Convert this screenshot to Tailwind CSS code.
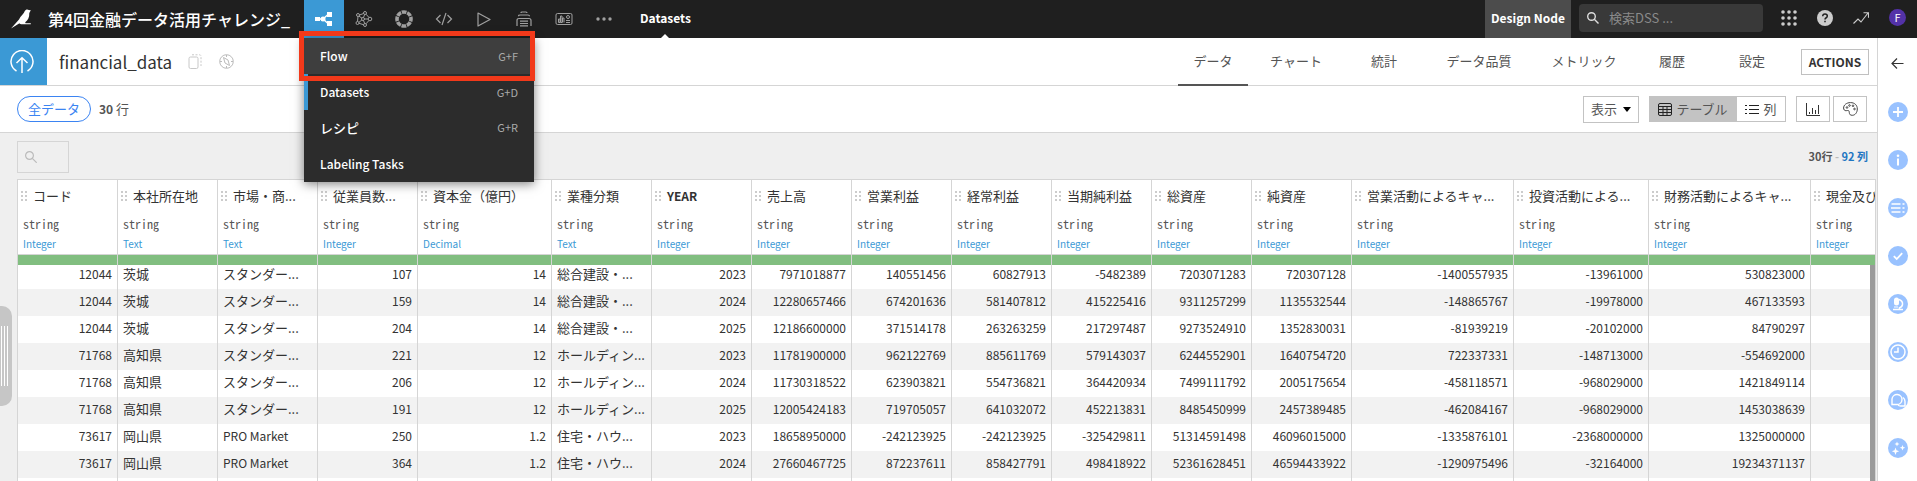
<!DOCTYPE html>
<html lang="ja">
<head>
  <meta charset="UTF-8">
  <meta name="viewport" content="width=device-width, initial-scale=1.0">
  <title>financial_data - Datasets</title>
  <script src="https://cdn.jsdelivr.net/npm/@tailwindcss/browser@4"></script>
</head>
<body class="flex flex-col h-screen overflow-hidden bg-white text-[#333] text-[13px] leading-5 font-['Noto_Sans_CJK_JP',sans-serif]">

  <!-- Top bar -->
  <header class="flex h-[38px] shrink-0 items-center bg-[#1f1f1f] text-white">
    <div class="flex w-[304px] items-center pb-px">
      <a href="#" class="ml-[11px] mr-[17px]" aria-label="Home">
        <svg class="block w-5 h-5" viewBox="0 0 20 20" fill="#fff">
          <path d="M19.800 1.200 17.800.9C16.500 0 14.500.3 13.800 2 13 4.500 9.500 7 8 10.500L0 19.500 8.500 14.200C8.500 15 10 15.200 11 15.200H19.800V14.200H14.500L14.200 13.200C17 11.500 18.500 8 18.300 4z"/>
        </svg>
      </a>
      <a href="#" class="text-base font-medium whitespace-nowrap">第4回金融データ活用チャレンジ_</a>
    </div>

    <nav class="relative flex h-full items-center text-[#a0a0a0]">
      <button class="flex w-10 h-full items-center justify-center bg-[#3b99d5] text-white" aria-label="Flow">
        <svg class="w-[18px] h-[14px]" viewBox="0 0 18 14" fill="currentColor"><path d="M0 5h5v4H0zM12 0h5v5h-5zM12 9h5v5h-5z"/><circle cx="8" cy="7" r="2.500"/><path d="M4 7h4l5-4.500M8 7l5 4.500" stroke="currentColor" stroke-width="1.400" fill="none"/></svg>
      </button>
      <button class="flex w-10 justify-center" aria-label="Lab">
        <svg class="w-[18px] h-[18px]" viewBox="0 0 18 18" fill="none" stroke="currentColor"><circle cx="3" cy="5" r="1.500"/><circle cx="2.500" cy="13" r="1.500"/><circle cx="10" cy="3" r="1.500"/><circle cx="15" cy="9" r="1.800"/><circle cx="10" cy="15" r="1.500"/><circle cx="8" cy="9" r="1.500"/><path d="M4.500 5 8.500 3.500M3 6.500 2.500 11.500M4 6.200 7 8.200M4 12.300 7 9.800M4 13.300 8.500 14.700M11 4.200 14 7.500M14 10.400 11 13.800M9.500 9H13M8.500 7.500 9.700 4.500M8.500 10.500 9.700 13.500"/></svg>
      </button>
      <button class="flex w-10 justify-center" aria-label="Analyses">
        <svg class="w-[18px] h-[18px]" viewBox="0 0 18 18" fill="none" stroke="currentColor"><circle cx="9" cy="9" r="7" stroke-width="3.600" pathLength="80" stroke-dasharray="8.500 1.500" stroke-dashoffset="4"/></svg>
      </button>
      <button class="flex w-10 justify-center" aria-label="Code">
        <svg class="w-[18px] h-[14px]" viewBox="0 0 18 14" fill="none" stroke="currentColor" stroke-width="1.200"><path d="M5.500 3 1.500 7l4 4M12.500 3l4 4-4 4M11 1 7 13"/></svg>
      </button>
      <button class="flex w-10 justify-center" aria-label="Jobs">
        <svg class="w-[14px] h-[15px]" viewBox="0 0 14 15" fill="none" stroke="currentColor" stroke-width="1.200" stroke-linejoin="round"><path d="M1 1 13 7.500 1 14z"/></svg>
      </button>
      <button class="flex w-10 justify-center" aria-label="Automation">
        <svg class="w-4 h-4" viewBox="0 0 16 16" fill="none" stroke="currentColor" stroke-width="1.200"><path d="M5 2Q5 1 6 1h4q1 0 1 1M2.500 5.200Q2.500 4 4 4h8q1.500 0 1.500 1.200M1 15V9.500Q1 7.500 3 7.500h10q2 0 2 2V15M4 10.200h8M4 12.500h8M4 14.900h8"/></svg>
      </button>
      <button class="flex w-10 justify-center" aria-label="Dashboards">
        <svg class="w-[18px] h-[14px]" viewBox="0 0 18 14" fill="none" stroke="currentColor"><rect x="1" y="1.500" width="16" height="11" rx="1.500"/><path d="M3.500 10.500V7h1.500v3.500zM5.500 10.500V4H7v6.500zM7.500 10.500V6H9v4.500M11 8.500h4M11 10.500h4"/><circle cx="13" cy="5" r="1.500"/></svg>
      </button>
      <button class="flex w-10 justify-center" aria-label="More">
        <svg class="w-[18px] h-1" viewBox="0 0 18 4" fill="currentColor"><circle cx="3" cy="2" r="1.700"/><circle cx="9" cy="2" r="1.700"/><circle cx="15" cy="2" r="1.700"/></svg>
      </button>

      <!-- Flow menu -->
      <div class="absolute left-0 top-full z-20 w-[230px] bg-[#2c2c2c] text-white text-xs font-medium shadow-[0_2px_10px_rgba(0,0,0,.5)]">
        <a href="#" class="flex h-9 items-center justify-between bg-[#3e3e3e] px-4">Flow <span class="text-[11px] font-normal text-[#aaa]">G+F</span></a>
        <a href="#" class="flex h-9 items-center justify-between border-l-4 border-[#3b99d5] pl-3 pr-4">Datasets <span class="text-[11px] font-normal text-[#aaa]">G+D</span></a>
        <a href="#" class="flex h-9 items-center justify-between px-4 pb-px text-[13px]">レシピ <span class="text-[11px] font-normal text-[#aaa]">G+R</span></a>
        <a href="#" class="flex h-9 items-center px-4">Labeling Tasks</a>
      </div>
      <div class="absolute -left-[5px] top-[31px] z-30 w-[236px] h-[50px] border-[5px] border-[#f2391a]"></div>
    </nav>

    <a href="#" class="flex flex-col h-full justify-between items-center px-4 pt-2 text-xs leading-5 font-bold">
      Datasets
      <svg class="block w-2 h-1" viewBox="0 0 8 4" fill="#fff"><path d="M4 0 8 4H0z"/></svg>
    </a>

    <div class="ml-auto flex h-full items-center">
      <a href="#" class="flex h-full w-[86px] items-center justify-center bg-[#4c4c4c] pb-[2px] text-xs font-bold">Design Node</a>
      <label class="ml-2 mb-[2px] flex h-7 w-[184px] items-center rounded bg-[#393939] pl-2">
        <svg class="w-3 h-3 shrink-0" viewBox="0 0 12 12" fill="none" stroke="#ddd" stroke-width="1.400"><circle cx="4.500" cy="4.500" r="3.800"/><path d="M7.300 7.300 11.500 11.500"/></svg>
        <input type="search" aria-label="検索" placeholder="検索DSS ..." class="ml-[10px] w-full min-w-0 bg-transparent text-[13px] outline-none placeholder:text-[#8a8a8a]">
      </label>
      <button class="flex w-9 ml-2 justify-center pb-[2px]" aria-label="Apps">
        <svg class="w-4 h-4" viewBox="0 0 16 16" fill="#ccc"><circle cx="2" cy="2" r="1.800"/><circle cx="8" cy="2" r="1.800"/><circle cx="14" cy="2" r="1.800"/><circle cx="2" cy="8" r="1.800"/><circle cx="8" cy="8" r="1.800"/><circle cx="14" cy="8" r="1.800"/><circle cx="2" cy="14" r="1.800"/><circle cx="8" cy="14" r="1.800"/><circle cx="14" cy="14" r="1.800"/></svg>
      </button>
      <button class="flex w-9 justify-center pb-[2px]" aria-label="Help">
        <svg class="w-4 h-4" viewBox="0 0 16 16"><circle cx="8" cy="8" r="8" fill="#ccc"/><path d="M5.700 6.200Q5.800 4 8 4t2.300 2Q10.300 7.200 8.900 8 8 8.500 8 9.600M8 10.700v1.500" stroke="#1f1f1f" stroke-width="1.500" fill="none"/></svg>
      </button>
      <button class="flex w-9 justify-center pb-[2px]" aria-label="Activity">
        <svg class="w-4 h-3" viewBox="0 0 16 12" fill="none" stroke="#ccc" stroke-width="1.100"><path d="M.5 11.500 5 7l3 3 7-9M10.500.7h5v5"/></svg>
      </button>
      <button class="ml-[10px] mr-[11px] mb-1 flex w-[17px] h-[17px] items-center justify-center rounded-full bg-[#5332a8] text-[11px] leading-4">F</button>
    </div>
  </header>

  <div class="flex min-h-0 grow">
    <main class="flex min-w-0 grow flex-col">

      <!-- Dataset title and tabs -->
      <div class="flex h-12 shrink-0 items-center border-b border-[#d5d5d5]">
        <div class="flex w-[47px] h-full items-center justify-center bg-[#3b99d5] pr-[3px]">
          <svg class="w-6 h-6" viewBox="0 0 24 24" fill="none" stroke="#fff" stroke-width="1.500"><path d="M6.500 21A11 11 0 1 1 17.500 21M12 23V8M6.500 13 12 7.800 17.500 13"/></svg>
        </div>
        <h1 class="ml-3 text-[17px] leading-6 text-[#333]">financial_data</h1>
        <button class="ml-4" aria-label="Copy">
          <svg class="w-[14px] h-[15px]" viewBox="0 0 14 15" fill="none" stroke="#c8c8c8"><rect x="1" y="3" width="9" height="11.500" rx="1.500"/><path d="M4 .8h7.500q1.500 0 1.500 1.500V12" stroke-dasharray="2 1.500"/></svg>
        </button>
        <button class="ml-[17px]" aria-label="Explore">
          <svg class="w-[15px] h-[15px]" viewBox="0 0 15 15" fill="none" stroke="#bbb"><circle cx="7.500" cy="7.500" r="6.800"/><path d="M4.500 3.500 9 6l1.500 5.500L6 9zM7.500 1v2M7.500 12v2M1 7.500h2M12 7.500h2"/></svg>
        </button>
        <nav class="ml-auto flex h-full items-stretch text-center text-[#555] leading-[46px]">
          <a href="#" class="w-[70px] -mb-px border-b-2 border-[#555]">データ</a>
          <a href="#" class="w-[96px]">チャート</a>
          <a href="#" class="w-[80px]">統計</a>
          <a href="#" class="w-[110px]">データ品質</a>
          <a href="#" class="w-[100px]">メトリック</a>
          <a href="#" class="w-[76px]">履歴</a>
          <a href="#" class="w-[84px]">設定</a>
        </nav>
        <button class="ml-[7px] mr-2 h-[26px] w-[68px] border border-[#c0c0c0] text-xs font-bold">ACTIONS</button>
      </div>

      <!-- Sample and display options -->
      <div class="flex h-[47px] shrink-0 items-center border-b border-[#d5d5d5] pl-[17px] pr-[10px] text-[#555]">
        <button class="h-[26px] w-[74px] rounded-full border border-[#3b84f2] text-[#3b84f2]">全データ</button>
        <p class="ml-2 pb-px"><b class="text-xs">30</b> 行</p>
        <button class="ml-auto flex h-[27px] w-14 items-center justify-center gap-[6px] border border-[#c3c3c3]">表示
          <svg class="w-2 h-[5px]" viewBox="0 0 8 5"><path d="M0 0h8L4 5z"/></svg>
        </button>
        <div class="ml-[10px] flex h-[26px]">
          <button class="flex w-[88px] items-center justify-center gap-1 bg-[#c3c3c3]">
            <svg class="w-[14px] h-[13px]" viewBox="0 0 14 13" fill="none" stroke="#222"><rect x=".5" y=".5" width="13" height="12" rx="1.500"/><path d="M.5 3.500h13M.5 6.500h13M.5 9.500h13M5 3.500v9M9 3.500v9"/></svg>
            テーブル
          </button>
          <button class="flex w-[49px] items-center justify-center gap-1 border border-l-0 border-[#c3c3c3]">
            <svg class="w-[14px] h-[9px]" viewBox="0 0 14 9" stroke="#222"><path d="M0 .5h2M4 .5h10M0 4.500h2M4 4.500h10M0 8.500h2M4 8.500h10"/></svg>
            列
          </button>
        </div>
        <button class="ml-[10px] flex h-[26px] w-[34px] items-center justify-center border border-[#c3c3c3]" aria-label="Statistics">
          <svg class="w-[14px] h-[13px]" viewBox="0 0 14 13" fill="none" stroke="#333"><path d="M.5 0v12.500H14M3.500 9v2M6.500 5v6M9.500 7v4M12.500 2v9"/></svg>
        </button>
        <button class="ml-[3px] flex h-[26px] w-[34px] items-center justify-center border border-[#c3c3c3]" aria-label="Colors">
          <svg class="w-[15px] h-[14px]" viewBox="0 0 15 14" fill="none" stroke="#444"><path d="M7.500.6C3.500.6.6 3 .6 6c0 1.700 1 2.700 2.300 2.700 1.200 0 2.300-.6 3 .2.900 1-.6 4.400 3.400 4.400 3 0 5-3 5-6.300C14.300 3 11.500.6 7.500.6z"/><circle cx="4" cy="5.500" r=".8"/><circle cx="6.500" cy="3.500" r=".8"/><circle cx="10" cy="3.800" r=".8"/><circle cx="11.500" cy="7" r=".8"/></svg>
        </button>
      </div>

      <!-- Table area -->
      <div class="relative flex min-h-0 grow flex-col bg-[#efefef] pl-[17px] pr-px">
        <div class="flex h-[46px] shrink-0 items-center justify-between pr-2">
          <label class="mt-[2px] flex h-8 w-[52px] items-center border border-[#d5d5d5] pl-[7px]">
            <svg class="w-3 h-3 shrink-0" viewBox="0 0 12 12" fill="none" stroke="#bbb" stroke-width="1.200"><circle cx="4.500" cy="4.500" r="3.900"/><path d="M7.300 7.300 11.700 11.700"/></svg>
            <input type="text" aria-label="列を検索" class="w-full min-w-0 bg-transparent outline-none">
          </label>
          <p class="text-[11px] font-bold text-[#555]">30行 <span class="text-[#bbb]">-</span> <a href="#" class="text-[#1f76c2]">92 列</a></p>
        </div>

        <div class="relative min-h-0 grow overflow-hidden border-t border-r border-[#d5d5d5] bg-white">
          <table class="w-[1955px] table-fixed border-separate border-spacing-0 text-left">
            <thead><tr id="columns"></tr></thead>
            <tbody id="rows"></tbody>
          </table>
          <div class="absolute right-0 top-[85px] bottom-0 w-[5px] bg-[#9a9a9a]"></div>
        </div>

        <!-- Panel handle -->
        <button class="absolute left-0 top-[173px] flex h-[100px] w-3 items-center justify-center gap-[2px] rounded-r-[10px] bg-[#c6c6c6] pr-1" aria-label="Open panel">
          <span class="h-[60px] w-px bg-white"></span>
          <span class="h-[60px] w-px bg-white"></span>
          <span class="h-[60px] w-px bg-white"></span>
        </button>
      </div>
    </main>

    <!-- Right panel -->
    <aside class="flex w-10 shrink-0 flex-col items-center gap-7 border-l border-[#d5d5d5] pt-4">
      <button aria-label="Back"><svg class="block w-5 h-5" viewBox="0 0 20 20" fill="none" stroke="#333" stroke-width="1.200"><path d="M15.500 9.500h-11M9 4.500l-5 5 5 5"/></svg></button>
      <button aria-label="Add"><svg class="block w-5 h-5" viewBox="0 0 20 20"><circle cx="10" cy="10" r="10" fill="#99c2ff"/><path d="M10 5v10M5 10h10" stroke="#fff" stroke-width="1.800"/></svg></button>
      <button aria-label="Details"><svg class="block w-5 h-5" viewBox="0 0 20 20"><circle cx="10" cy="10" r="10" fill="#99c2ff"/><circle cx="10" cy="5.800" r="1.300" fill="#fff"/><path d="M10 8.500v7" stroke="#fff" stroke-width="2"/></svg></button>
      <button aria-label="Schema"><svg class="block w-5 h-5" viewBox="0 0 20 20"><circle cx="10" cy="10" r="10" fill="#99c2ff"/><path d="M3.500 6h9M3 10h9.500M3.500 14h9M14.500 6h2M14.500 10h2M14.500 14h2" stroke="#fff" stroke-width="1.700"/></svg></button>
      <button aria-label="Checks"><svg class="block w-5 h-5" viewBox="0 0 20 20"><circle cx="10" cy="10" r="10" fill="#99c2ff"/><path d="M5.800 10.200 8.700 13l5.500-5.800" stroke="#fff" stroke-width="1.800" fill="none"/></svg></button>
      <button aria-label="Lab"><svg class="block w-5 h-5" viewBox="0 0 20 20"><circle cx="10" cy="10" r="10" fill="#99c2ff"/><rect x="6" y="3.500" width="5" height="8" rx="2.500" fill="#fff"/><path d="M11 5.500q4 1.500 3.500 5-.5 2.700-3 3.200V15M5 15.500h10" stroke="#fff" stroke-width="1.500" fill="none"/><path d="M6 13h4" stroke="#fff"/></svg></button>
      <button aria-label="History"><svg class="block w-5 h-5" viewBox="0 0 20 20"><circle cx="10" cy="10" r="10" fill="#99c2ff"/><circle cx="10" cy="10" r="7" stroke="#fff" stroke-width="1.500" fill="none"/><path d="M10 5.500V10H6" stroke="#fff" stroke-width="1.500" fill="none"/></svg></button>
      <button aria-label="Discussions"><svg class="block w-5 h-5" viewBox="0 0 20 20"><circle cx="10" cy="10" r="10" fill="#99c2ff"/><path d="M4 14.500V9a5 5 0 1 1 5 5.500zM15 7.500q2 1.500 2 4V16h-4.500q-1.500 0-2.500-.7" stroke="#fff" stroke-width="1.400" fill="none"/></svg></button>
      <button aria-label="Assistant"><svg class="block w-5 h-5" viewBox="0 0 20 20"><circle cx="10" cy="10" r="10" fill="#99c2ff"/><path d="M7.500 9.500 8.500 12.200 11.200 13.200 8.500 14.200 7.500 17 6.500 14.200 3.800 13.200 6.500 12.200zM9 3.500l.7 1.800 1.800.7-1.800.7L9 8.500l-.7-1.800L6.500 6l1.800-.7zM14.500 7l.8 2 2 .8-2 .8-.8 2-.8-2-2-.8 2-.8z" fill="#fff"/></svg></button>
    </aside>
  </div>

  <script>
    // name, meaning, column width
    const COLUMNS = [
      ['コード', 'Integer', 100],
      ['本社所在地', 'Text', 100],
      ['市場・商...', 'Text', 100],
      ['従業員数...', 'Integer', 100],
      ['資本金（億円）', 'Decimal', 134],
      ['業種分類', 'Text', 100],
      ['YEAR', 'Integer', 100],
      ['売上高', 'Integer', 100],
      ['営業利益', 'Integer', 100],
      ['経常利益', 'Integer', 100],
      ['当期純利益', 'Integer', 100],
      ['総資産', 'Integer', 100],
      ['純資産', 'Integer', 100],
      ['営業活動によるキャ...', 'Integer', 162],
      ['投資活動による...', 'Integer', 135],
      ['財務活動によるキャ...', 'Integer', 162],
      ['現金及び', 'Integer', 162],
    ];

    const ROWS = [
      ['12044', '茨城', 'スタンダー...', '107', '14', '総合建設・...', '2023', '7971018877', '140551456', '60827913', '-5482389', '7203071283', '720307128', '-1400557935', '-13961000', '530823000', ''],
      ['12044', '茨城', 'スタンダー...', '159', '14', '総合建設・...', '2024', '12280657466', '674201636', '581407812', '415225416', '9311257299', '1135532544', '-148865767', '-19978000', '467133593', ''],
      ['12044', '茨城', 'スタンダー...', '204', '14', '総合建設・...', '2025', '12186600000', '371514178', '263263259', '217297487', '9273524910', '1352830031', '-81939219', '-20102000', '84790297', ''],
      ['71768', '高知県', 'スタンダー...', '221', '12', 'ホールディン...', '2023', '11781900000', '962122769', '885611769', '579143037', '6244552901', '1640754720', '722337331', '-148713000', '-554692000', ''],
      ['71768', '高知県', 'スタンダー...', '206', '12', 'ホールディン...', '2024', '11730318522', '623903821', '554736821', '364420934', '7499111792', '2005175654', '-458118571', '-968029000', '1421849114', ''],
      ['71768', '高知県', 'スタンダー...', '191', '12', 'ホールディン...', '2025', '12005424183', '719705057', '641032072', '452213831', '8485450999', '2457389485', '-462084167', '-968029000', '1453038639', ''],
      ['73617', '岡山県', 'PRO Market', '250', '1.2', '住宅・ハウ...', '2023', '18658950000', '-242123925', '-242123925', '-325429811', '51314591498', '46096015000', '-1335876101', '-2368000000', '1325000000', ''],
      ['73617', '岡山県', 'PRO Market', '364', '1.2', '住宅・ハウ...', '2024', '27660467725', '872237611', '858427791', '498418922', '52361628451', '46594433922', '-1290975496', '-32164000', '19234371137', ''],
      ['', '', '', '', '', '', '', '', '', '', '', '', '', '', '', '', ''],
    ];

    const isLatin = text => /^[\x20-\x7e]*$/.test(text);
    const grip = `<svg class="w-[6px] h-[10px] mr-[6px] shrink-0" viewBox="0 0 6 10" fill="#ccc"><path d="M0 0h2v2H0zM4 0h2v2H4zM0 4h2v2H0zM4 4h2v2H4zM0 8h2v2H0zM4 8h2v2H4z"/></svg>`;

    document.getElementById('columns').innerHTML = COLUMNS.map(([name, meaning, width]) => `
      <th class="border-l border-[#d5d5d5] p-0 font-normal" style="width:${width}px">
        <div class="flex h-8 items-center pl-[3px] whitespace-nowrap">${grip}<span class="${isLatin(name) ? 'text-xs font-bold' : ''}">${name}</span></div>
        <div class="h-6 pl-[5px] text-xs leading-6 text-[#555] font-['Noto_Sans_Mono_CJK_JP',monospace]">string</div>
        <div class="h-[18px] pl-[5px] text-[10px] leading-4 text-[#3b99d5]">${meaning}</div>
        <div class="relative -mb-[3px] h-[11px] border-t border-[#d5d5d5] bg-[#81be80]"></div>
      </th>`).join('');

    document.getElementById('rows').innerHTML = ROWS.map(row => `
      <tr class="even:bg-[#f2f2f2]">${row.map((value, i) => {
        const align = COLUMNS[i][1] === 'Text' ? 'text-left' : 'text-right';
        const size = isLatin(value) ? 'text-xs' : 'text-[13px]';
        return `<td class="h-[27px] border-l border-[#d5d5d5] px-[5px] pt-0 pb-[3px] whitespace-nowrap leading-5 ${align} ${size}">${value}</td>`;
      }).join('')}</tr>`).join('');
  </script>
</body>
</html>
